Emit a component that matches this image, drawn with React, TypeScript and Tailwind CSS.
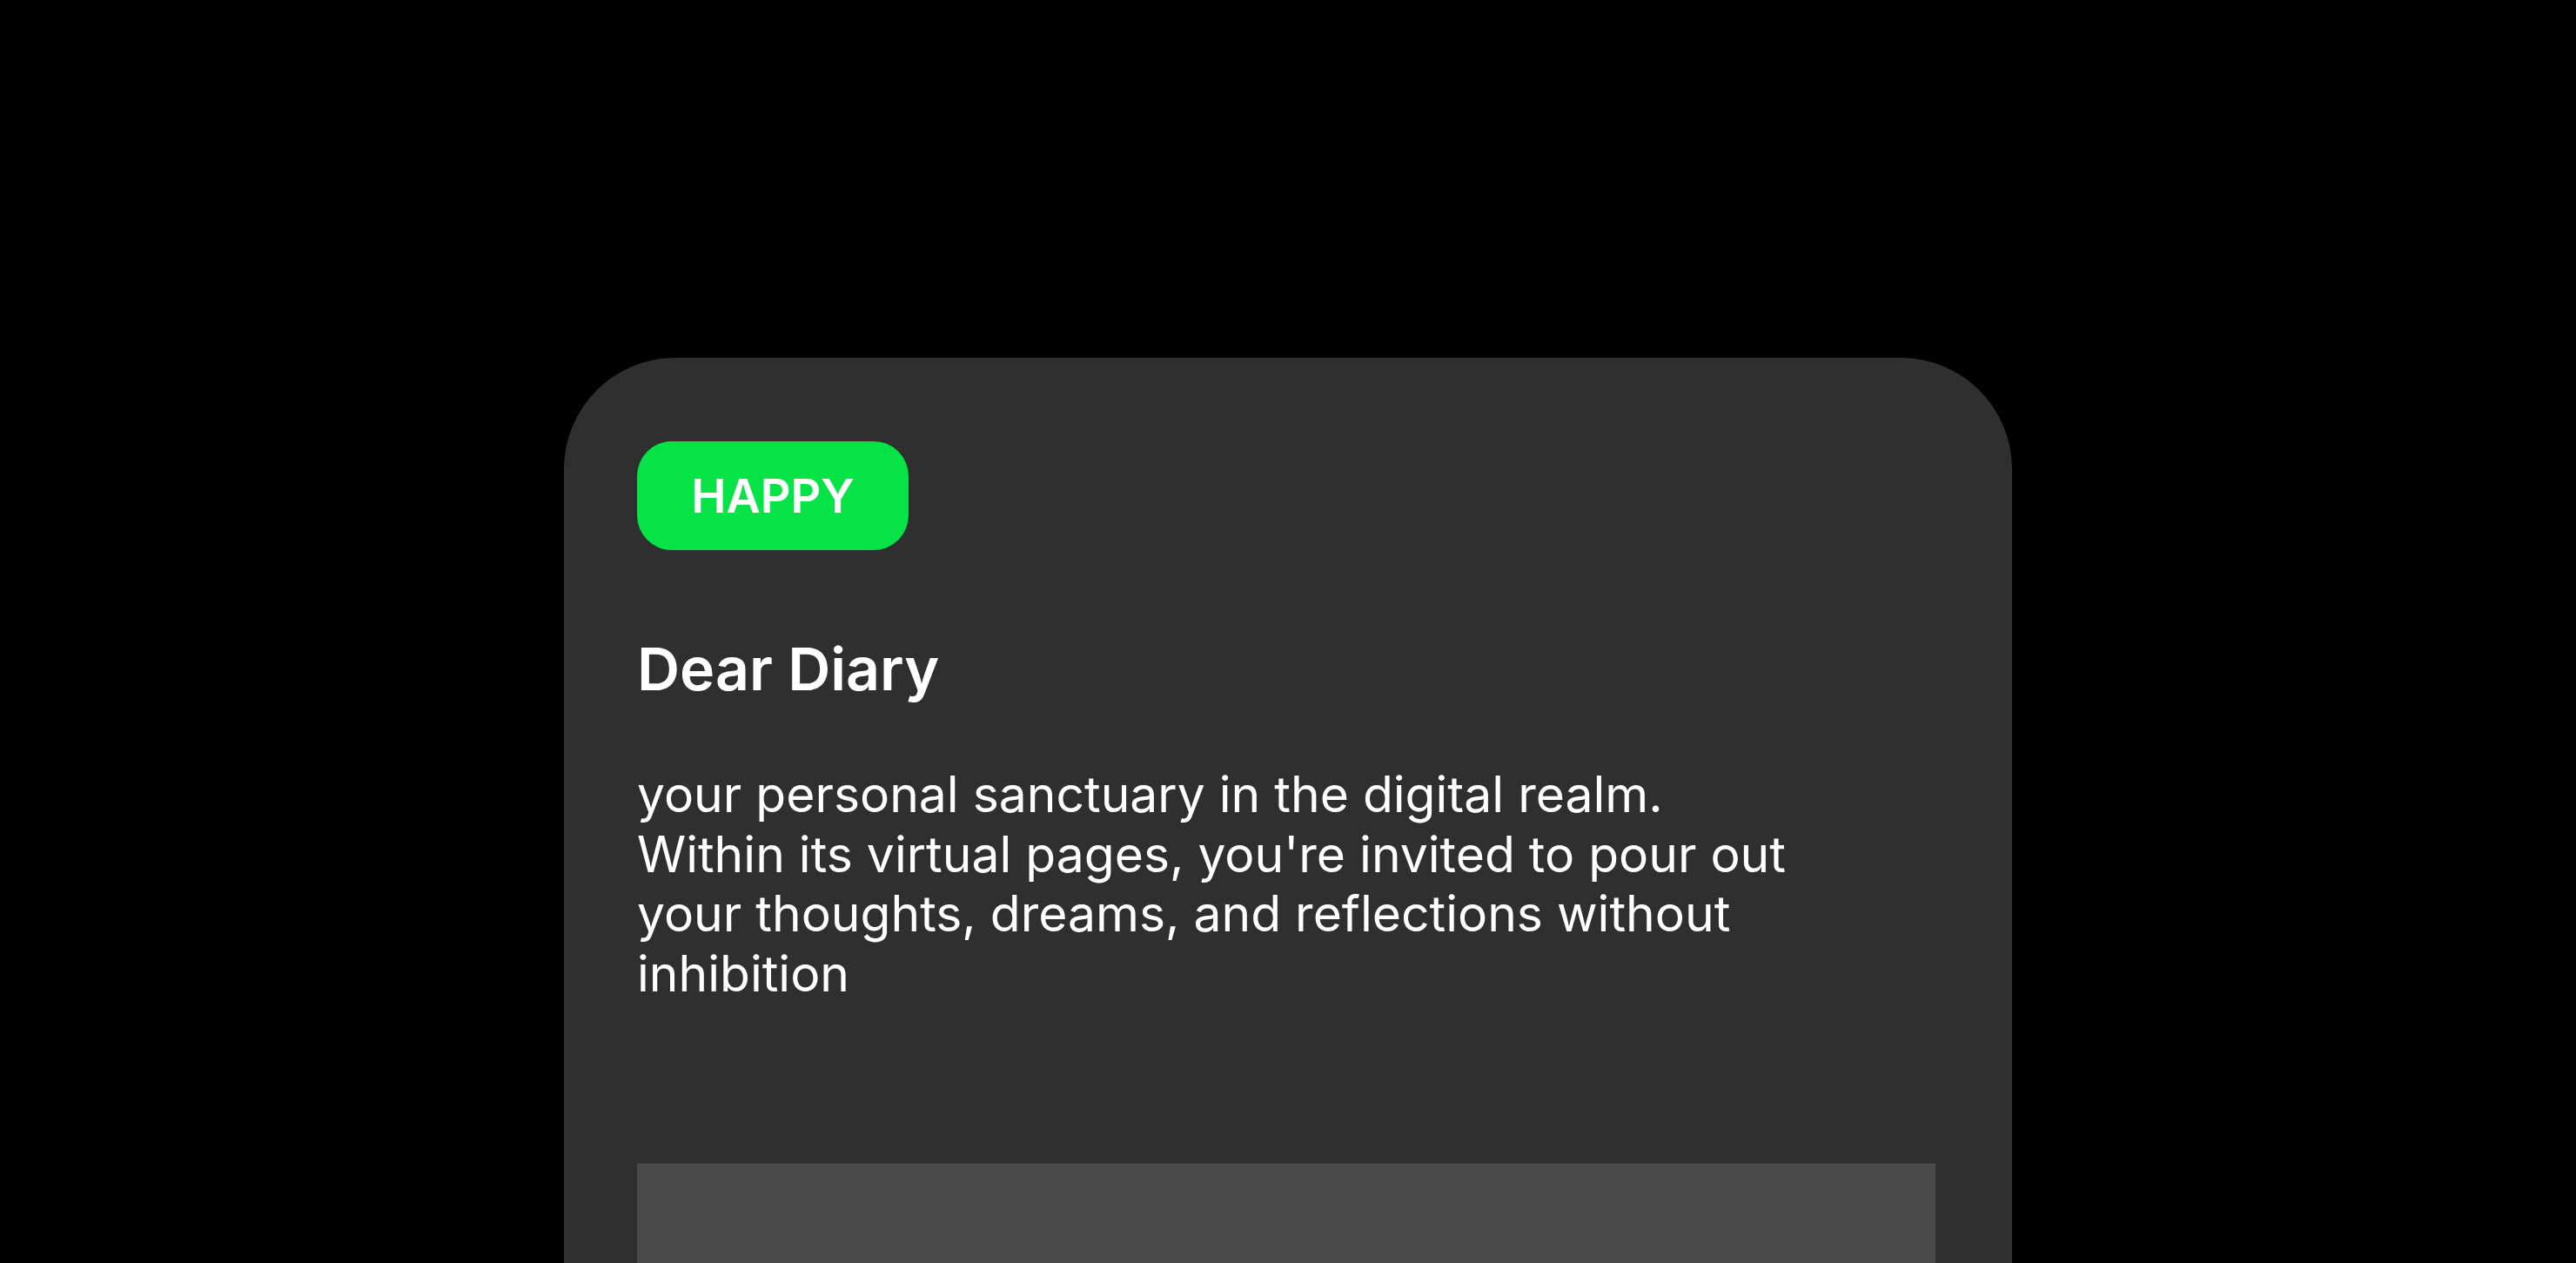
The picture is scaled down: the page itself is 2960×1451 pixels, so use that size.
import React from "react";

export default function App() {
  return (
    <div
      className="h-screen w-full overflow-hidden bg-black flex justify-center items-start pt-[411px]"
      style={{ fontFamily: "Inter, 'Noto Sans', sans-serif" }}
    >
      <div className="w-[1664px] shrink-0 bg-[#2f2f2f] rounded-t-[128px] pt-[96px] pl-[84px] pr-[88px] flex flex-col">
        <div className="shrink-0 w-[312px] h-[125px] rounded-[40px] bg-[#05e346] flex items-center justify-center">
          <span className="text-white font-semibold text-[54px] leading-none">HAPPY</span>
        </div>
        <h1 className="shrink-0 mt-[95px] text-white font-semibold text-[68px] leading-[1.21]">
          Dear Diary
        </h1>
        <p className="shrink-0 mt-[70px] max-w-[1390px] text-white text-[57px] leading-[68.5px]">
          your personal sanctuary in the digital realm.
          <br />
          Within its virtual pages, you're invited to pour out your thoughts, dreams, and reflections without inhibition
        </p>
        <div className="shrink-0 mt-[184px] h-[400px] w-full bg-[#4a4a4a] border-t border-[#555555]" />
      </div>
    </div>
  );
}
